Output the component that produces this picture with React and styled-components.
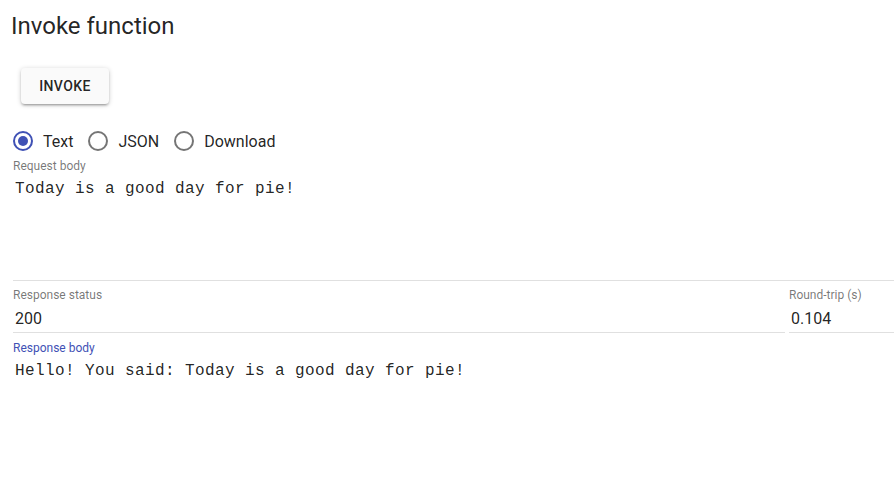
import React, { useState } from 'react';
import styled, { createGlobalStyle } from 'styled-components';

const Global = createGlobalStyle`
  body {
    margin: 0;
    background: #fff;
    font-family: Roboto, "Liberation Sans", sans-serif;
    color: rgba(0, 0, 0, 0.87);
  }
`;

const Page = styled.div`
  padding: 12px 0 0 13px;
  overflow: hidden;
`;

const Title = styled.h1`
  margin: 0 0 0 -2px;
  font-size: 24px;
  font-weight: 400;
  line-height: 28px;
`;

const Button = styled.button`
  margin: 28px 0 0 8px;
  min-width: 88px;
  height: 36px;
  padding: 0 16px;
  border: none;
  border-radius: 4px;
  background: #fafafa;
  box-shadow: 0 1px 5px rgba(0, 0, 0, 0.2), 0 2px 2px rgba(0, 0, 0, 0.14), 0 3px 1px -2px rgba(0, 0, 0, 0.12);
  font-family: Roboto, sans-serif;
  font-size: 14px;
  font-weight: 500;
  letter-spacing: 0.02857em;
  color: rgba(0, 0, 0, 0.87);
  text-transform: uppercase;
`;

const RadioRow = styled.div`
  display: flex;
  align-items: center;
  gap: 15px;
  margin-top: 25px;
  height: 24px;
`;

const RadioLabel = styled.label`
  display: flex;
  align-items: center;
  gap: 10px;
  font-size: 16px;
  cursor: pointer;
`;

const Circle = styled.span`
  box-sizing: border-box;
  width: 20px;
  height: 20px;
  border-radius: 50%;
  border: 2px solid ${p => (p.$on ? '#3f51b5' : 'rgba(0,0,0,0.54)')};
  display: flex;
  align-items: center;
  justify-content: center;

  &::after {
    content: '';
    width: 10px;
    height: 10px;
    border-radius: 50%;
    background: #3f51b5;
    display: ${p => (p.$on ? 'block' : 'none')};
  }
`;

const Field = styled.div`
  flex: ${p => p.$grow || 'none'};
  width: ${p => p.$width || 'auto'};
  padding-top: ${p => p.$top || 6}px;
  border-bottom: ${p => (p.$line ? '1px solid #e0e0e0' : 'none')};
`;

const Label = styled.div`
  font-size: 12px;
  line-height: 16px;
  color: ${p => (p.$focus ? '#3f51b5' : 'rgba(0, 0, 0, 0.54)')};
`;

const Value = styled.div`
  margin-top: 4px;
  padding-left: 2px;
  font-size: 16px;
  line-height: 24px;
  height: 25px;
`;

const Mono = styled.pre`
  margin: 3px 0 0;
  padding-left: 2px;
  font-family: "Liberation Mono", "DejaVu Sans Mono", monospace;
  font-size: 16px;
  letter-spacing: 0.4px;
  line-height: 24px;
  height: ${p => p.$height}px;
  color: rgba(0, 0, 0, 0.87);
`;

const Row = styled.div`
  display: flex;
  gap: 4px;
`;

const options = ['Text', 'JSON', 'Download'];

export default function App() {
  const [mode, setMode] = useState('Text');
  return (
    <Page>
      <Global />
      <Title>Invoke function</Title>
      <Button>Invoke</Button>
      <RadioRow>
        {options.map(o => (
          <RadioLabel key={o} onClick={() => setMode(o)}>
            <Circle $on={mode === o} />
            {o}
          </RadioLabel>
        ))}
      </RadioRow>
      <Field $top={5} $line>
        <Label>Request body</Label>
        <Mono $height={103}>Today is a good day for pie!</Mono>
      </Field>
      <Row>
        <Field $grow={1} $line>
          <Label>Response status</Label>
          <Value>200</Value>
        </Field>
        <Field $width="105px" $line>
          <Label>Round-trip (s)</Label>
          <Value>0.104</Value>
        </Field>
      </Row>
      <Field $top={7}>
        <Label $focus>Response body</Label>
        <Mono $height={100}>Hello! You said: Today is a good day for pie!</Mono>
      </Field>
    </Page>
  );
}
